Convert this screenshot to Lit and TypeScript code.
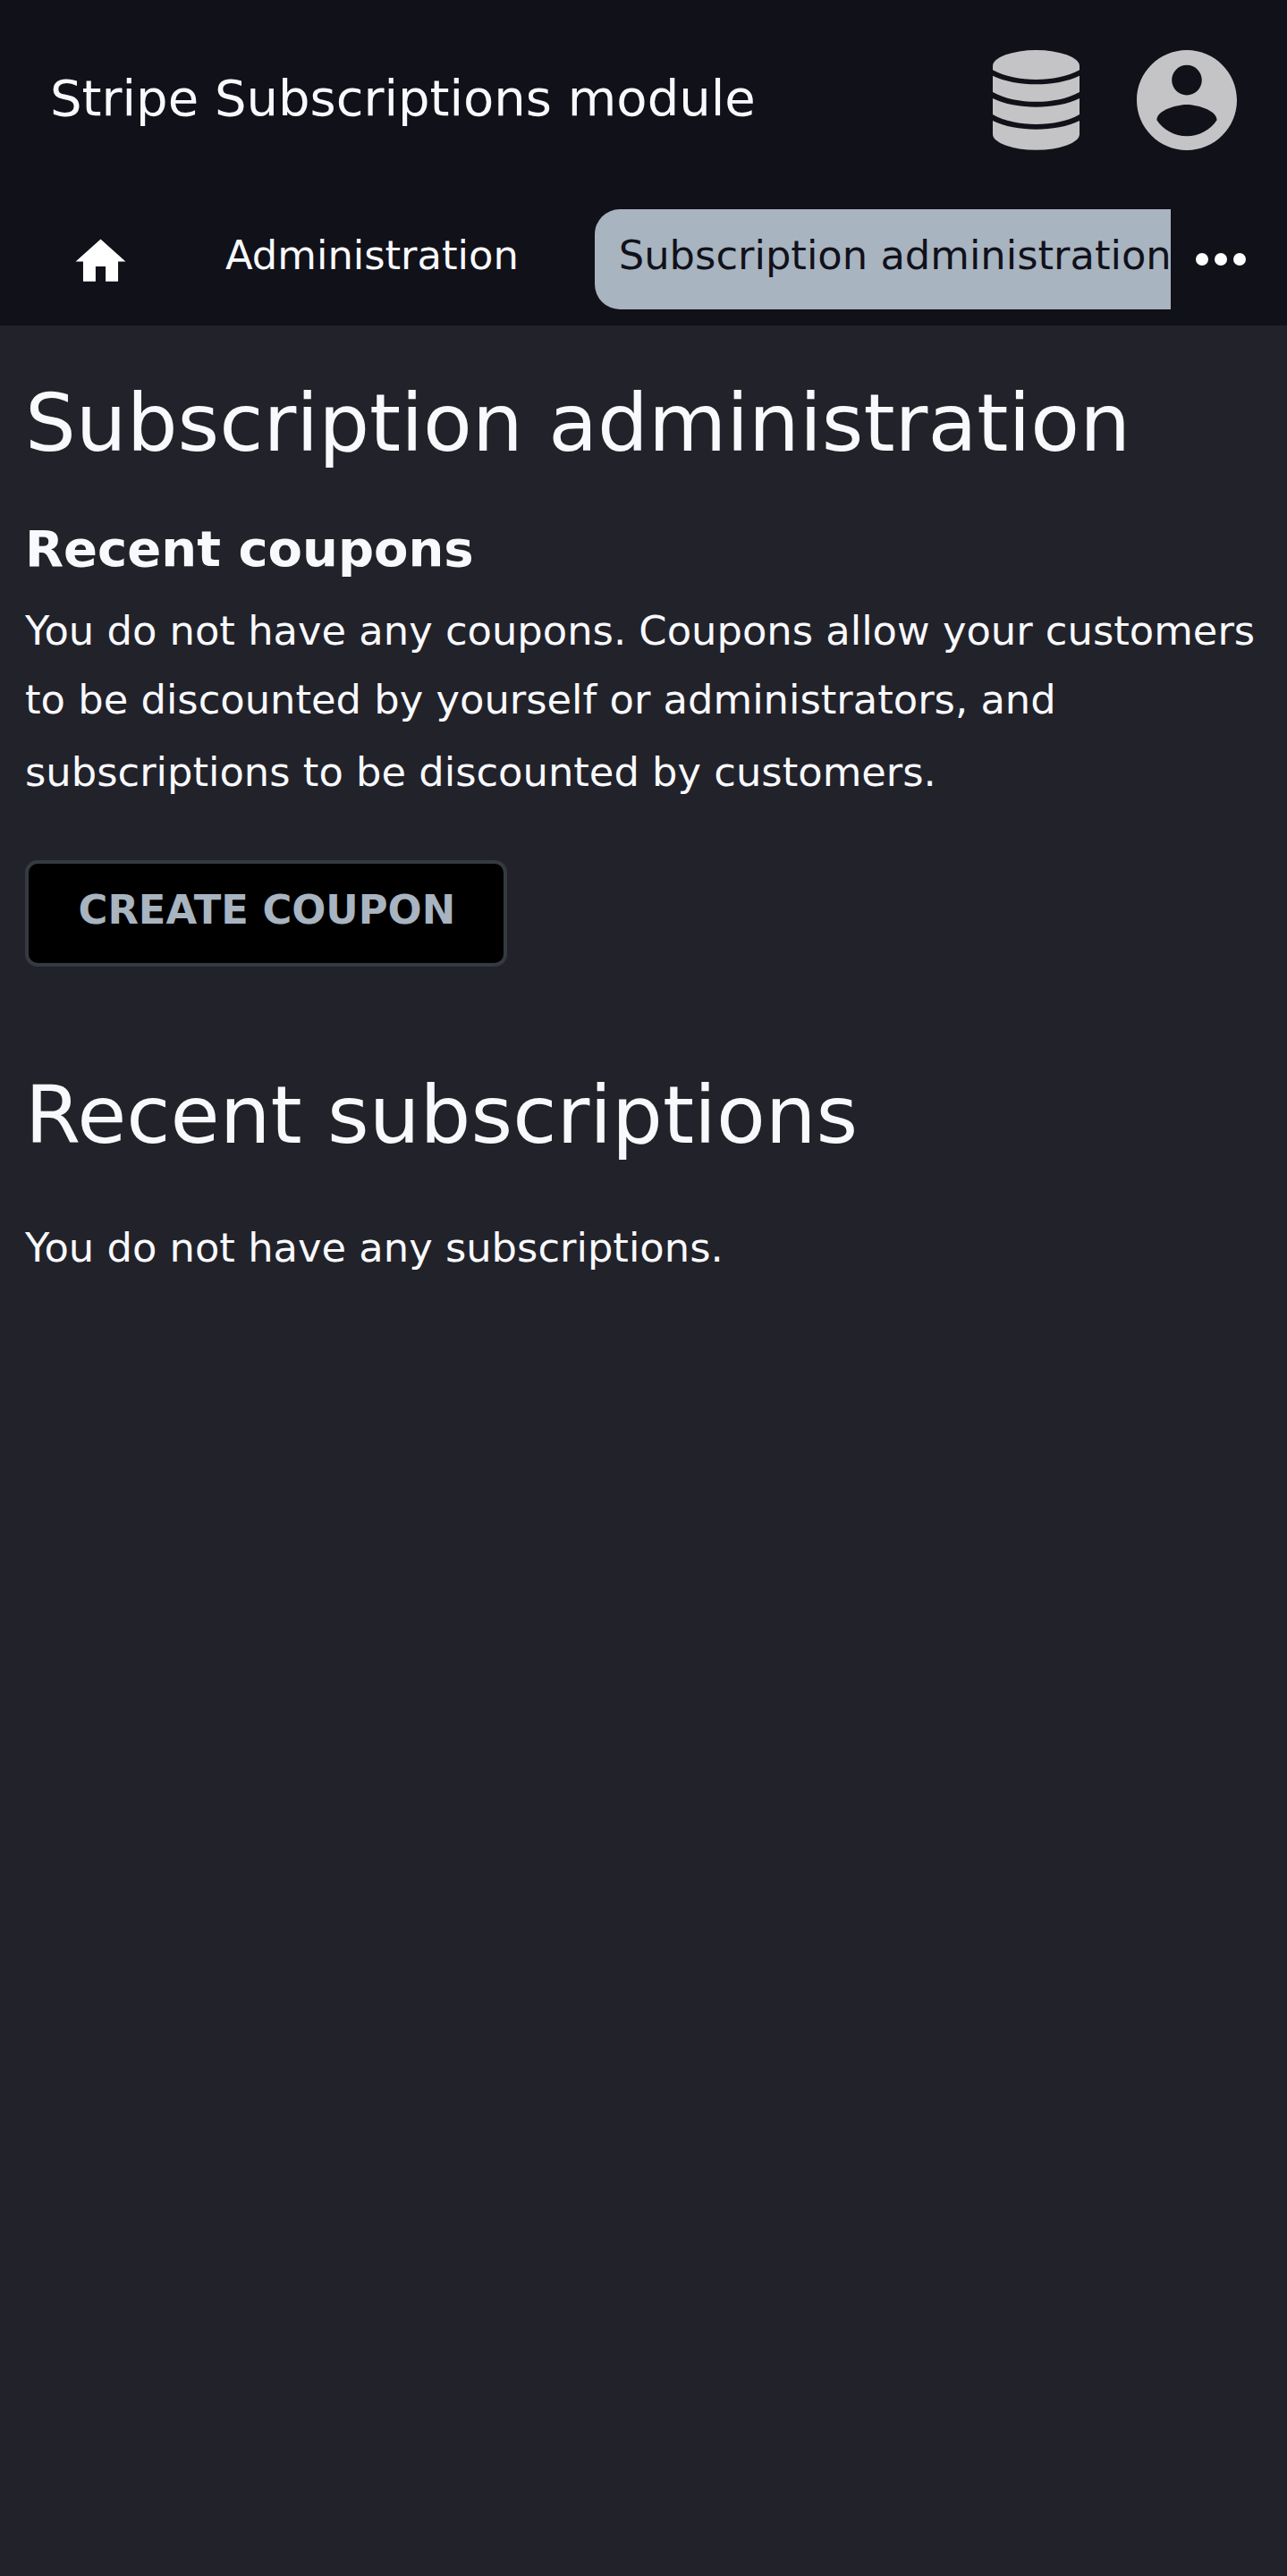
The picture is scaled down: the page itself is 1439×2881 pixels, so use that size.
import { LitElement, html, css } from "lit";
import { customElement } from "lit/decorators.js";

@customElement("app-root")
export class AppRoot extends LitElement {
  static styles = css`
    :host {
      display: block;
      min-height: 2881px;
      background: #22222a;
      color: #f8f9fc;
      font: 44.8px/79px "DejaVu Sans", sans-serif;
    }
    header { height: 364px; background: #11111a; }
    .bar { display: flex; align-items: center; height: 224px; padding: 0 56px; box-sizing: border-box; }
    .title { flex: 1; font-size: 56px; line-height: 79px; margin-bottom: 5px; white-space: nowrap; }
    .icons { display: flex; gap: 56px; }
    .icons svg { width: 112px; height: 112px; fill: #c4c4c6; display: block; }
    nav { display: flex; height: 140px; padding-top: 10.3px; box-sizing: border-box; }
    .tabs { display: flex; width: 1309px; overflow: hidden; }
    .tab { flex: none; height: 112px; border-radius: 28px; padding: 0 28px; line-height: 103px; white-space: nowrap; box-sizing: border-box; }
    .home { width: 112px; margin-left: 56px; padding: 24.5px 0 0 22.5px; }
    .home svg { display: block; width: 67px; height: 67px; fill: #fff; }
    .admin { margin-left: 56px; }
    .active { margin-left: 57px; padding: 0 27px; background: #a8b4c0; color: #11111a; }
    .more { width: 84px; height: 84px; margin: 14px 0 0 14px; fill: #fff; }
    main { padding: 0 28px; }
    h1, h2, p { margin: 0; font-weight: 400; }
    h1 { font-size: 89.6px; line-height: 108px; padding-top: 55px; }
    h2 { font-size: 56px; line-height: 79px; font-weight: 700; padding-top: 47px; }
    .empty { padding-top: 13px; }
    .line { display: block; white-space: nowrap; }
    .second { line-height: 75px; }
    .third { line-height: 87px; }
    .create {
      display: block; box-sizing: border-box; width: 539px; height: 119px; margin: 55px 0 0;
      border: 4px solid #343a40; border-radius: 14px; background: #000; color: #a8b4c0;
      font: 700 44.8px/103px "DejaVu Sans", sans-serif; padding: 0 0 8px 55.5px; text-align: left; white-space: nowrap;
    }
    .subs { padding-top: 112px; }
    .none { padding-top: 55px; }
  `;

  render() {
    return html`
      <header>
        <div class="bar">
          <div class="title">Stripe Subscriptions module</div>
          <div class="icons">
            <svg viewBox="0 0 112 112">
              <path d="M7 18A48.5 18 0 0 1 104 18V22.3C91 29.5 73 33 55.5 33S20 29.5 7 22.3Z" />
              <path d="M7 28.7C20 35 38 38.3 55.5 38.3S91 35 104 28.7V46.9C91 54.2 73 57.7 55.5 57.7S20 54.2 7 46.9Z" />
              <path d="M7 54C20 60.4 38 63.7 55.5 63.7S91 60.4 104 54V72C91 79.5 73 83 55.5 83S20 79.5 7 72Z" />
              <path d="M7 79C20 85.4 38 88.7 55.5 88.7S91 85.4 104 79V94A48.5 17.8 0 0 1 7 94Z" />
            </svg>
            <svg viewBox="2 2 20 20">
              <path d="M12 2C6.48 2 2 6.48 2 12s4.48 10 10 10 10-4.48 10-10S17.52 2 12 2zm0 3c1.66 0 3 1.34 3 3s-1.34 3-3 3-3-1.34-3-3 1.34-3 3-3zm0 14.2c-2.5 0-4.71-1.28-6-3.22.03-1.99 4-3.08 6-3.08 1.99 0 5.97 1.09 6 3.08-1.29 1.94-3.5 3.22-6 3.22z" />
            </svg>
          </div>
        </div>
        <nav>
          <div class="tabs">
            <div class="tab home"><svg viewBox="0 0 24 24"><path d="M10 20v-6h4v6h5v-8h3L12 3 2 12h3v8z" /></svg></div>
            <div class="tab admin">Administration</div>
            <div class="tab active">Subscription administration</div>
          </div>
          <svg class="more" viewBox="0 0 24 24"><circle cx="6" cy="12" r="2" /><circle cx="12" cy="12" r="2" /><circle cx="18" cy="12" r="2" /></svg>
        </nav>
      </header>
      <main>
        <h1>Subscription administration</h1>
        <h2>Recent coupons</h2>
        <p class="empty">
          <span class="line">You do not have any coupons. Coupons allow your customers</span>
          <span class="line second">to be discounted by yourself or administrators, and</span>
          <span class="line third">subscriptions to be discounted by customers.</span>
        </p>
        <button class="create">CREATE COUPON</button>
        <h1 class="subs">Recent subscriptions</h1>
        <p class="none">You do not have any subscriptions.</p>
      </main>
    `;
  }
}
